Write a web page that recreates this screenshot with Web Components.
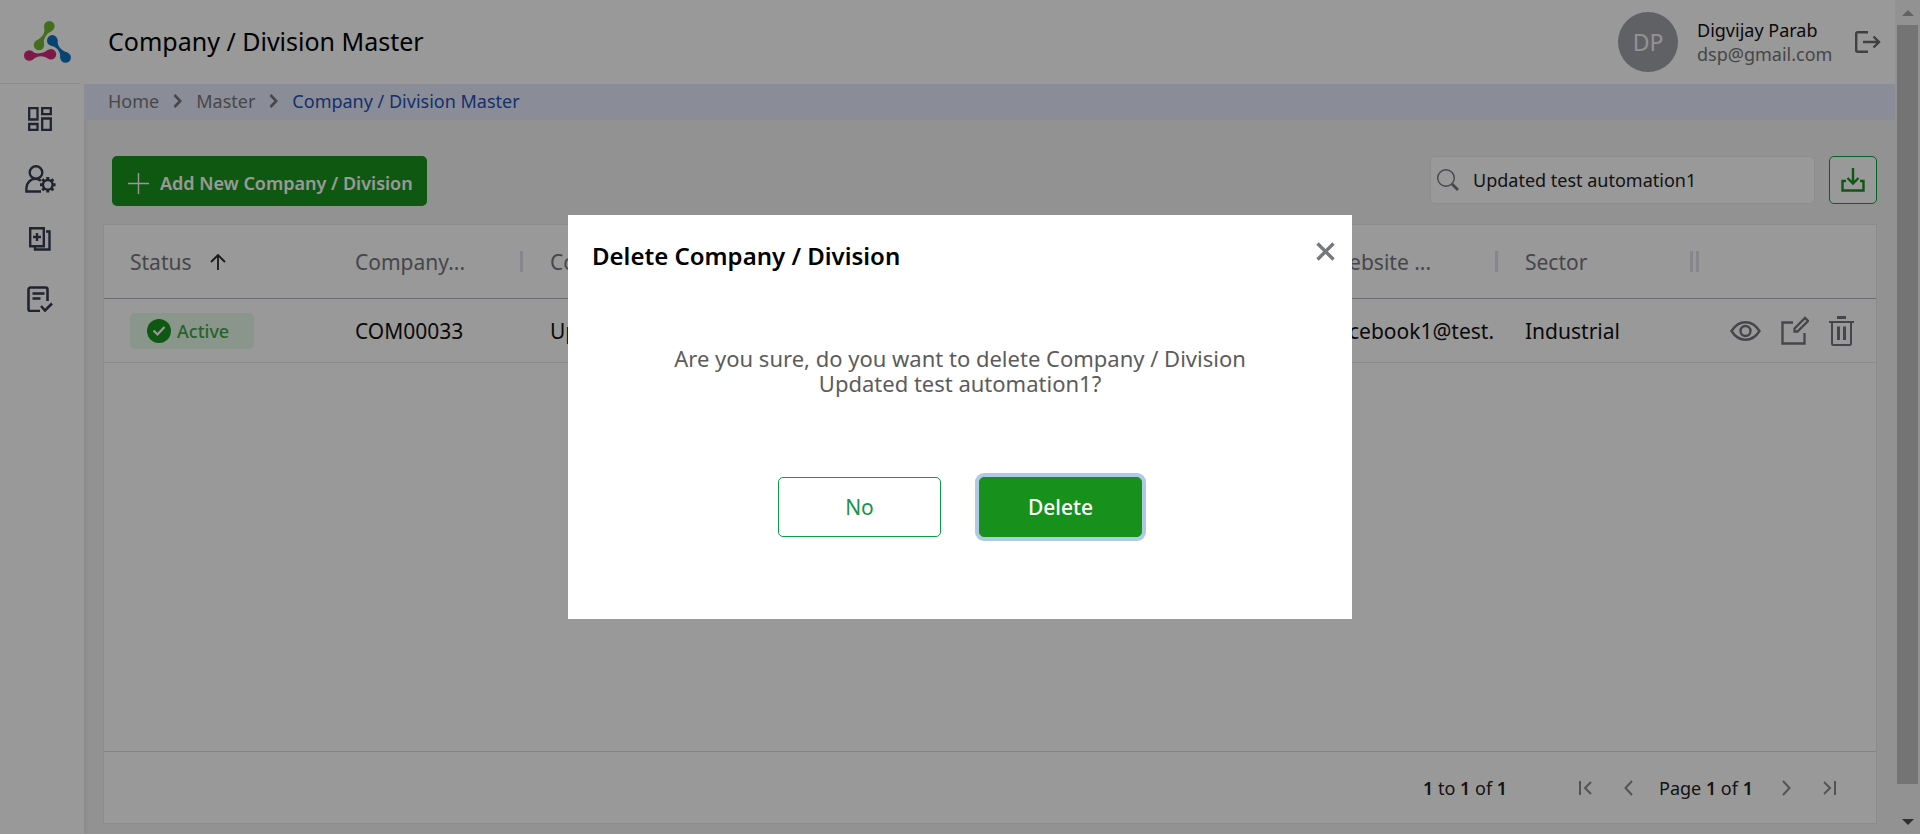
<!DOCTYPE html>
<html lang="en">
<head>
<meta charset="utf-8">
<title>Company / Division Master</title>
<style>
  html, body { margin: 0; height: 100%; }
  body { font-family: "Noto Sans", "Open Sans", sans-serif; font-size: 18px; color: #111; background: #f3f3f3; }
</style>
</head>
<body>
<app-shell>
  <side-nav slot="side"></side-nav>
  <page-header slot="header" name="Digvijay Parab" mail="dsp@gmail.com" initials="DP">Company / Division Master</page-header>
  <bread-crumbs slot="crumbs"></bread-crumbs>
  <tool-bar slot="tools"></tool-bar>
  <data-card slot="content"></data-card>
  <scroll-track slot="scroll"></scroll-track>
</app-shell>
<confirm-dialog heading="Delete Company / Division">Are you sure, do you want to delete Company / Division Updated test automation1?</confirm-dialog>

<script>
const define = (name, html) => customElements.define(name, class extends HTMLElement {
  connectedCallback() {
    if (this.shadowRoot) return;
    const t = document.createElement('template');
    t.innerHTML = '<style>*{box-sizing:border-box}button,input{font-family:inherit;margin:0}button{cursor:pointer}svg{display:block;flex:none}</style>'
      + (typeof html === 'function' ? html(this) : html);
    this.attachShadow({ mode: 'open' }).append(t.content.cloneNode(true));
  }
});

define('app-shell', `
<style>
  :host { display: flex; min-height: 100vh; }
  .main { flex: 1; min-width: 0; display: flex; flex-direction: column; }
  .body { flex: 1; display: flex; flex-direction: column; gap: 18px; padding: 36px 18px 10px 19px; }
  ::slotted(data-card) { flex: 1; }
</style>
<slot name="side"></slot>
<div class="main">
  <slot name="header"></slot>
  <slot name="crumbs"></slot>
  <main class="body"><slot name="tools"></slot><slot name="content"></slot></main>
</div>
<slot name="scroll"></slot>`);

define('side-nav', `
<style>
  :host { display: block; width: 84px; flex: none; background: #fff; box-shadow: 1px 0 4px rgba(0,0,0,.08); }
  .logo { display: block; width: 80px; height: 84px; padding: 20px 8px 0 23px; border-bottom: 1px solid #e9e9ea; }
  nav { width: 80px; padding-top: 5px; }
  nav a { display: flex; height: 60px; align-items: center; justify-content: center; color: #363d52; }
</style>
<a class="logo" href="#" aria-label="Start page">
  <svg width="49" height="44" viewBox="23 20 49 44">
    <g fill="#70b733"><circle cx="49.300" cy="26.200" r="5.300"/><circle cx="39" cy="45" r="5.200"/><path d="M44.200 27.500C45.500 33 42.500 37 36.500 40.500L43.800 47C43 40 45 34.500 51.500 31Z"/></g>
    <g fill="#cf2a78"><circle cx="29.300" cy="55.500" r="5.300"/><circle cx="51" cy="54.200" r="5.200"/><path d="M31.500 50.700C35 54.500 42 54.500 48.500 49.600V58.800C43 55 37 55.500 32 60.100Z"/></g>
    <g fill="#0b72c2"><circle cx="52.300" cy="40.400" r="5.300"/><circle cx="65.600" cy="57.500" r="5.300"/><path d="M57.500 39.500C57 46 61 50.500 67.500 52.600L60.400 58.500C60.500 51.500 57.500 47 50.500 45.400Z"/></g>
  </svg>
</a>
<nav aria-label="Main">
  <a href="#" aria-label="Dashboard"><svg width="24" height="24" viewBox="0 0 24 24" fill="none" stroke="currentColor" stroke-width="2.300"><path d="M1.200 1.200h8.300v11.300H1.200zM14.200 1.200h8.600v6h-8.600zM1.200 17h8.300v5.800H1.200zM14.200 11.500h8.600v11.300h-8.600z"/></svg></a>
  <a href="#" aria-label="User settings"><svg width="31" height="28" viewBox="0 0 31 28" fill="none" stroke="currentColor" stroke-width="2.400"><circle cx="11" cy="7.500" r="6.300"/><path d="M16 26.500H1.400v-3.300c0-5 4-9.300 9-9.300 2.500 0 4 .6 5.500 1.800"/><circle cx="22.800" cy="19.800" r="4.800"/><g stroke-width="3"><path d="M22.800 12v3M22.800 24.600v3M15 19.800h3M27.600 19.800h3M17.300 14.300l2 2M26.300 23.300l2 2M28.300 14.300l-2 2M19.300 23.300l-2 2"/></g></svg></a>
  <a href="#" aria-label="Masters"><svg width="22" height="24" viewBox="0 0 22 24" fill="none" stroke="currentColor" stroke-width="2.400"><path d="M1.200 1.200h13.600v18H1.200zM17 4.500h3.500V22.500H6V19M8 6v8M4 10h8"/></svg></a>
  <a href="#" aria-label="Reports"><svg width="26" height="26" viewBox="0 0 26 26" fill="none" stroke="currentColor" stroke-width="2.600"><path d="M13 25H3.500A2 2 0 0 1 1.500 23V3.500a2 2 0 0 1 2-2h15a2 2 0 0 1 2 2V15M5.500 7.500h12M5.500 12.500h8M14 20l4 4.500 7-7"/></svg></a>
</nav>`);

define('page-header', el => `
<style>
  :host { display: flex; align-items: center; height: 84px; padding: 0 14px 0 24px; background: #fff; }
  h1 { margin: 0; flex: 1; padding-bottom: 2px; font-size: 25px; font-weight: 400; line-height: 32px; color: #000; }
  .avatar { width: 60px; height: 60px; border-radius: 50%; background: #a1a2a8; color: #f4f4f4; font-size: 23px; display: flex; align-items: center; justify-content: center; }
  .who { min-width: 139px; margin: 0 19px; line-height: 24px; }
  .who div + div { color: #757575; }
  button { border: 0; padding: 0; background: none; color: #6b6b6b; }
</style>
<h1><slot></slot></h1>
<div class="avatar">${el.getAttribute('initials')}</div>
<div class="who"><div>${el.getAttribute('name')}</div><div>${el.getAttribute('mail')}</div></div>
<button aria-label="Log out"><svg width="26" height="22" viewBox="0 0 26 22" fill="none" stroke="currentColor" stroke-width="2.400"><path d="M13 1.200H2.700A1.500 1.500 0 0 0 1.200 2.700v16.600A1.500 1.500 0 0 0 2.700 20.800H13M8 11h16M18.500 5.500L24 11l-5.500 5.500"/></svg></button>`);

define('bread-crumbs', `
<style>
  :host { display: block; background: #e6ebfd; }
  nav { display: flex; align-items: center; gap: 14px; height: 36px; padding: 0 24px 2px; }
  a { color: #777; text-decoration: none; line-height: 24px; }
  a[aria-current] { color: #2450b5; }
  svg { color: #777; }
</style>
<nav aria-label="Breadcrumb">
  <a href="#">Home</a>
  <svg width="9" height="14" viewBox="0 0 9 14" fill="none" stroke="currentColor" stroke-width="2.600"><path d="M1.500 1L7.200 7l-5.700 6"/></svg>
  <a href="#">Master</a>
  <svg width="9" height="14" viewBox="0 0 9 14" fill="none" stroke="currentColor" stroke-width="2.600"><path d="M1.500 1L7.200 7l-5.700 6"/></svg>
  <a href="#" aria-current="page">Company / Division Master</a>
</nav>`);

define('tool-bar', `
<style>
  :host { display: flex; align-items: flex-start; padding-left: 9px; }
  .add { display: flex; align-items: center; gap: 11px; height: 50px; padding: 4px 14px 0 16px; border: 0; border-radius: 5px; background: #18931d; color: #fff; font-size: 18px; font-weight: 600; }
  .search { display: flex; align-items: center; gap: 14px; width: 385px; height: 48px; margin-left: auto; padding: 0 6px; background: #fff; border: 1px solid #ebebeb; border-radius: 5px; color: #74767c; }
  input { flex: 1; min-width: 0; border: 0; outline: 0; padding: 0; background: none; font-size: 18px; color: #222; }
  .get { width: 48px; height: 48px; margin-left: 14px; display: flex; align-items: center; justify-content: center; border: 1px solid #0a9f45; border-radius: 5px; background: #fff; color: #18931d; padding: 0; }
</style>
<button class="add"><svg width="21" height="21" viewBox="0 0 21 21" stroke="#fff" stroke-width="1.400"><path d="M10.500 0v21M0 10.500h21"/></svg>Add New Company / Division</button>
<label class="search"><svg width="22" height="22" viewBox="0 0 22 22" fill="none" stroke="currentColor"><circle cx="9" cy="9" r="8.300" stroke-width="1.400"/><path d="M15 15l6 6" stroke-width="2.800"/></svg><input type="text" aria-label="Search" value="Updated test automation1"></label>
<button class="get" aria-label="Download"><svg width="24" height="24" viewBox="0 0 24 24" fill="none" stroke="currentColor" stroke-width="2.400"><path d="M5 13H1.500v9.500h21V13H19M12 0v15M6.500 10l5.500 5.500 5.500-5.500"/></svg></button>`);

define('status-badge', `
<style>
  :host { display: flex; align-items: center; gap: 6px; width: 124px; height: 36px; padding-left: 17px; border-radius: 5px; background: #e6fbe9; color: #3fa547; font-size: 18px; font-weight: 500; box-sizing: border-box; }
</style>
<svg width="24" height="24" viewBox="0 0 24 24"><circle cx="12" cy="12" r="12" fill="#18931d"/><path d="M6.500 11.500l4 4 7-7.500" fill="none" stroke="#fff" stroke-width="2.200"/></svg><span><slot></slot></span>`);

define('data-card', `
<style>
  :host { display: flex; flex-direction: column; background: #fff; border: 1px solid #e8e8eb; }
  table { width: 100%; table-layout: fixed; border-collapse: separate; border-spacing: 0; font-size: 21px; }
  th, td { padding: 0 0 0 26px; text-align: left; font-weight: 400; white-space: nowrap; overflow: hidden; }
  th { height: 74px; color: #75767c; border-bottom: 1px solid #b4b5bc; }
  td { height: 64px; border-bottom: 1px solid #e6e7ea; }
  .bar { background: linear-gradient(#dde2eb, #dde2eb) right 1px center / 3px 21px no-repeat; }
  .edge { background: linear-gradient(#dde2eb, #dde2eb) left 2px center / 3px 21px no-repeat; }
  .sort { display: flex; align-items: center; gap: 18px; }
  td.last { padding-left: 36px; }
  .acts { display: flex; align-items: center; gap: 20px; color: #75767c; }
  .acts button { border: 0; padding: 0; background: none; color: inherit; }
  footer { margin-top: auto; height: 72px; display: flex; align-items: center; justify-content: flex-end; padding-right: 40px; border-top: 1px solid #dcdde0; color: #222; }
  footer p { margin: 0; line-height: 24px; }
  footer button { border: 0; background: none; padding: 0; color: #8c8c8c; }
  .sum { margin-right: 68px; }
  b { font-weight: 600; }
  .pages { display: flex; align-items: center; gap: 26px; }
  .pages p { min-width: 97px; }
  .sum { min-width: 88px; }
  .jump { display: flex; gap: 32px; }
</style>
<table>
  <colgroup><col style="width:225px"><col><col><col><col><col><col><col><col style="width:182px"></colgroup>
  <thead><tr>
    <th><span class="sort">Status<svg width="16" height="16" viewBox="0 0 16 16" fill="none" stroke="#26282c" stroke-width="1.800"><path d="M8 16V1.500M1 8l7-7 7 7"/></svg></span></th>
    <th class="bar">Company...</th><th class="bar">Co</th><th class="bar"></th><th class="bar"></th><th class="bar"></th>
    <th class="bar">Website ...</th><th class="bar">Sector</th><th class="edge"></th>
  </tr></thead>
  <tbody><tr>
    <td><status-badge>Active</status-badge></td><td>COM00033</td><td>Up</td><td></td><td></td><td></td>
    <td>facebook1@test.</td><td>Industrial</td>
    <td class="last"><div class="acts">
      <button aria-label="View"><svg width="31" height="20" viewBox="0 0 31 20" fill="none" stroke="currentColor" stroke-width="2.400"><path d="M1.500 10C5 4.500 10 1.200 15.500 1.200S26 4.500 29.500 10C26 15.500 21 18.800 15.500 18.800S5 15.500 1.500 10z"/><circle cx="15.500" cy="10" r="5"/></svg></button>
      <button aria-label="Edit"><svg width="28" height="30" viewBox="0 0 28 30" fill="none" stroke="currentColor" stroke-width="2.300"><path d="M12 6.500H1.500v21h22V17M13.500 12.500L24 2l3 3-10.500 10.500h-3z"/></svg></button>
      <button aria-label="Delete"><svg width="25" height="30" viewBox="0 0 25 30" fill="none" stroke="currentColor" stroke-width="2"><path d="M0 6h25M3 6v21.500a1.500 1.500 0 0 0 1.500 1.500h16a1.500 1.500 0 0 0 1.500-1.500V6"/><path d="M8 1.500h9M9.500 10.500V24M15.500 10.500V24" stroke-width="3"/></svg></button>
    </div></td>
  </tr></tbody>
</table>
<footer>
  <p class="sum"><b>1</b> to <b>1</b> of <b>1</b></p>
  <div class="pages">
    <div class="jump">
      <button aria-label="First page"><svg width="13" height="14" viewBox="0 0 13 14" fill="none" stroke="currentColor" stroke-width="2"><path d="M1 0v14M12 1L6 7l6 6"/></svg></button>
      <button aria-label="Previous page"><svg width="9" height="16" viewBox="0 0 9 16" fill="none" stroke="currentColor" stroke-width="2"><path d="M8 1L1.500 8 8 15"/></svg></button>
    </div>
    <p>Page <b>1</b> of <b>1</b></p>
    <div class="jump">
      <button aria-label="Next page"><svg width="9" height="16" viewBox="0 0 9 16" fill="none" stroke="currentColor" stroke-width="2"><path d="M1 1l6.500 7L1 15"/></svg></button>
      <button aria-label="Last page"><svg width="13" height="14" viewBox="0 0 13 14" fill="none" stroke="currentColor" stroke-width="2"><path d="M12 0v14M1 1l6 6-6 6"/></svg></button>
    </div>
  </div>
</footer>`);

define('scroll-track', `
<style>
  :host { display: flex; flex-direction: column; align-items: center; width: 25px; flex: none; background: #f4f4f4; padding: 10px 0 9px; box-sizing: border-box; }
  .thumb { flex: 1; width: 21px; margin: 9px 0 35px; background: #c1c1c1; }
</style>
<svg width="12" height="6" viewBox="0 0 12 6"><path d="M6 0l6 6H0z" fill="#a3a3a3"/></svg>
<div class="thumb"></div>
<svg width="12" height="6" viewBox="0 0 12 6"><path d="M0 0h12L6 6z" fill="#505050"/></svg>`);

define('confirm-dialog', el => `
<style>
  :host { position: fixed; inset: 0; z-index: 5; display: flex; align-items: center; justify-content: center; background: rgba(0,0,0,.4); }
  section { width: 784px; max-width: 100%; background: #fff; padding: 25px 17px 82px 24px; }
  header { display: flex; align-items: flex-start; justify-content: space-between; }
  h2 { margin: 0; font-size: 24px; line-height: 32px; font-weight: 600; color: #000; }
  .close { border: 0; padding: 2px 0 0; background: none; color: #75797e; }
  p { width: 600px; max-width: 100%; margin: 74px auto 81px; text-align: center; font-size: 22px; line-height: 25px; color: #5c5c5c; }
  .row { display: flex; justify-content: center; gap: 38px; }
  .body { padding-right: 7px; }
  .row button { width: 163px; height: 60px; border-radius: 5px; border: 1px solid #0a9f45; background: #fff; color: #1a9448; font-size: 21px; }
  .row .go { background: #18911c; border-color: #18911c; color: #fff; font-weight: 500; box-shadow: 0 0 0 4px #b0c9e5; outline: 0; }
</style>
<section role="dialog" aria-modal="true" aria-labelledby="t">
  <header><h2 id="t">${el.getAttribute('heading')}</h2>
    <button class="close" aria-label="Close"><svg width="19" height="19" viewBox="0 0 19 19" fill="none" stroke="currentColor" stroke-width="3.400"><path d="M1.500 1.500l16 16M17.500 1.500l-16 16"/></svg></button></header>
  <div class="body">
    <p><slot></slot></p>
    <div class="row"><button>No</button><button class="go">Delete</button></div>
  </div>
</section>`);
</script>
</body>
</html>
